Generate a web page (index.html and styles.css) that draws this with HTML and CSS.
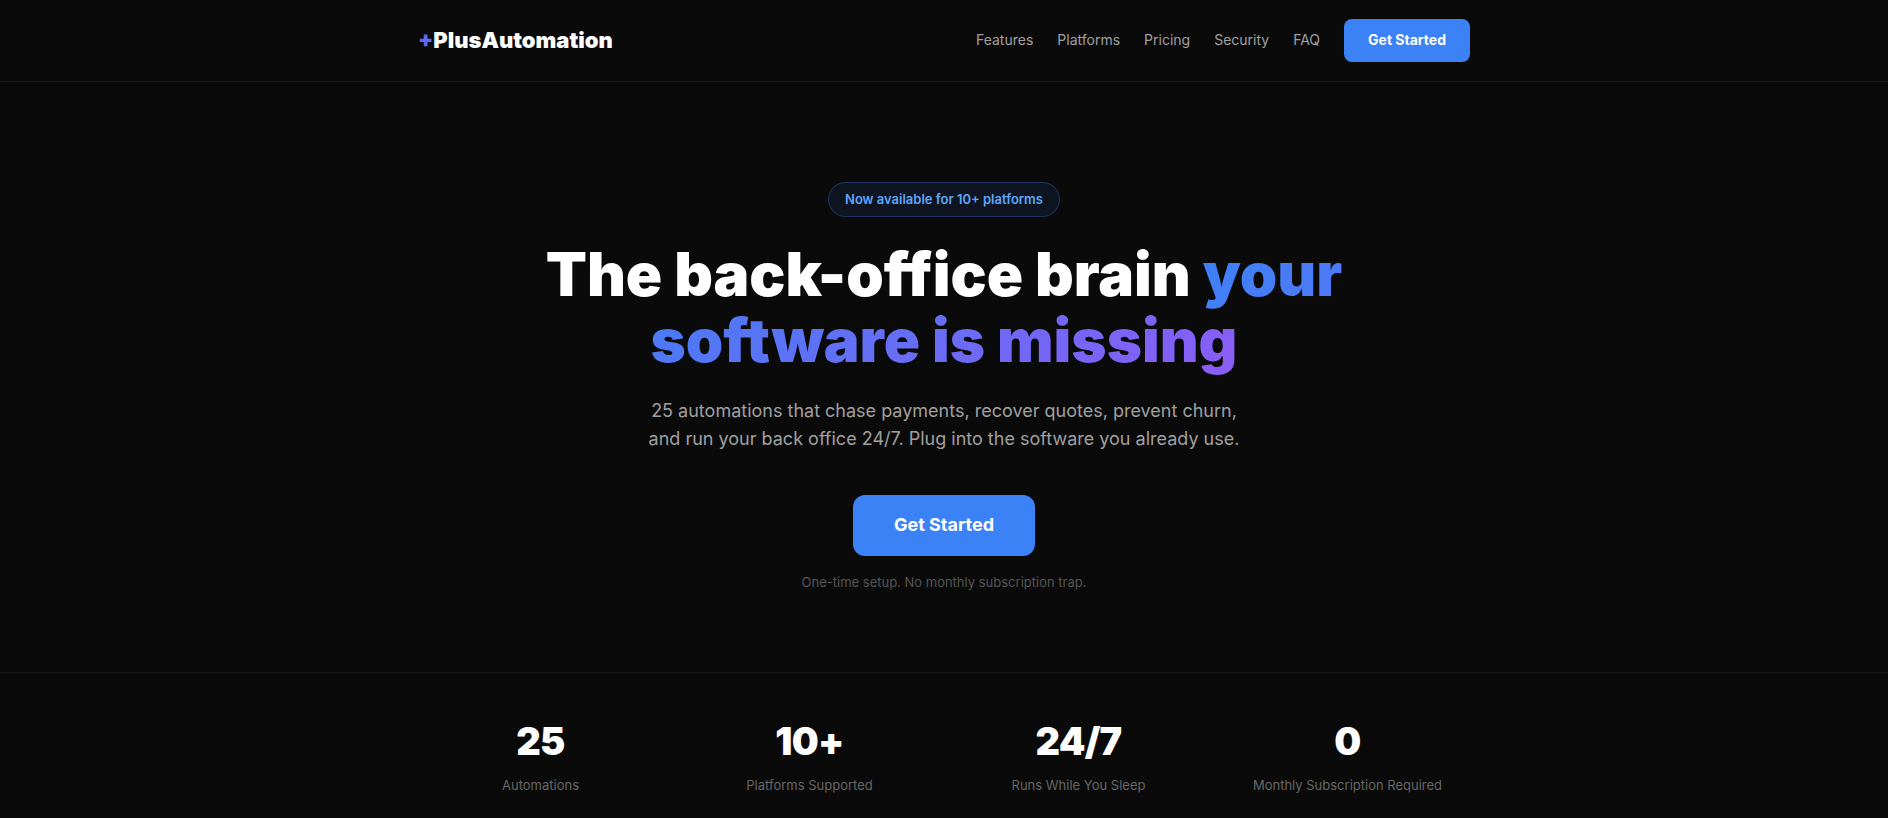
FILE: index.html
```html
<!DOCTYPE html>
<html lang="en">
<head>
    <meta charset="UTF-8">
    <meta name="viewport" content="width=device-width, initial-scale=1.0">
    <title>PlusAutomation</title>
    <link rel="stylesheet" href="styles.css">
</head>
<body>
    <nav class="nav">
        <div class="container nav-inner">
            <a href="#" class="logo"><span class="logo-plus">+</span>PlusAutomation</a>
            <div class="nav-links">
                <a href="#">Features</a>
                <a href="#">Platforms</a>
                <a href="#">Pricing</a>
                <a href="#">Security</a>
                <a href="#">FAQ</a>
                <a href="#" class="nav-cta">Get Started</a>
            </div>
        </div>
    </nav>

    <section class="hero">
        <div class="container hero-inner">
            <div class="badge">Now available for 10+ platforms</div>
            <h1>The back-office brain <span class="gradient-text">your software is missing</span></h1>
            <p class="hero-sub">25 automations that chase payments, recover quotes, prevent churn, and run your back office 24/7. Plug into the software you already use.</p>
            <a href="#" class="hero-cta">Get Started</a>
            <p class="hero-note">One-time setup. No monthly subscription trap.</p>
        </div>
    </section>

    <section class="stats">
        <div class="container stats-grid">
            <div class="stat">
                <div class="stat-number">25</div>
                <div class="stat-label">Automations</div>
            </div>
            <div class="stat">
                <div class="stat-number">10+</div>
                <div class="stat-label">Platforms Supported</div>
            </div>
            <div class="stat">
                <div class="stat-number">24/7</div>
                <div class="stat-label">Runs While You Sleep</div>
            </div>
            <div class="stat">
                <div class="stat-number">0</div>
                <div class="stat-label">Monthly Subscription Required</div>
            </div>
        </div>
    </section>
</body>
</html>
```

FILE: styles.css
```css
* {
    margin: 0;
    padding: 0;
    box-sizing: border-box;
}

html, body {
    height: 818px;
    overflow: hidden;
}

body {
    font-family: 'Inter', 'Liberation Sans', sans-serif;
    background: #0a0a0a;
    color: #ffffff;
    line-height: 1.6;
}

a {
    text-decoration: none;
    color: inherit;
}

.container {
    max-width: 1100px;
    margin: 0 auto;
    padding: 0 24px;
}

/* nav */
.nav {
    border-bottom: 1px solid #1a1a1a;
    padding: 19.2px 0;
}

.nav-inner {
    display: flex;
    justify-content: space-between;
    align-items: center;
}

.logo {
    font-size: 22px;
    font-weight: 900;
}

.logo-plus {
    color: #6366f1;
}

.nav-links {
    display: flex;
    align-items: center;
    gap: 24px;
    font-size: 14px;
    color: #a0a0a0;
}

.nav-cta {
    background: #3b82f6;
    color: #ffffff;
    font-weight: 700;
    padding: 10px 24px;
    border-radius: 8px;
}

/* hero */
.hero {
    padding: 100px 0 79px;
    border-bottom: 1px solid #1a1a1a;
}

.hero-inner {
    display: flex;
    flex-direction: column;
    align-items: center;
    text-align: center;
}

.badge {
    font-size: 13px;
    font-weight: 600;
    color: #60a5fa;
    background: rgba(59, 130, 246, 0.1);
    border: 1px solid rgba(59, 130, 246, 0.3);
    border-radius: 100px;
    padding: 6px 16px;
    margin-bottom: 24px;
}

h1 {
    font-size: 60px;
    font-weight: 900;
    line-height: 1.115;
    max-width: 800px;
    margin-bottom: 22.2px;
}

.gradient-text {
    background: linear-gradient(135deg, #3b82f6, #8b5cf6);
    -webkit-background-clip: text;
    background-clip: text;
    color: transparent;
}

.hero-sub {
    font-size: 18px;
    color: #a0a0a0;
    max-width: 600px;
    margin-bottom: 41px;
}

.hero-cta {
    background: #3b82f6;
    font-size: 18px;
    font-weight: 700;
    padding: 16px 40.5px;
    border-radius: 12px;
    margin-bottom: 16px;
}

.hero-note {
    font-size: 13px;
    color: #555555;
}

/* stats */
.stats {
    padding: 38px 0;
}

.stats-grid {
    display: grid;
    grid-template-columns: repeat(4, 1fr);
    gap: 24px;
    text-align: center;
}

.stat-number {
    font-size: 38px;
    font-weight: 900;
    letter-spacing: -0.76px;
    margin-bottom: 3px;
}

.stat-label {
    font-size: 13px;
    color: #666666;
}
```
